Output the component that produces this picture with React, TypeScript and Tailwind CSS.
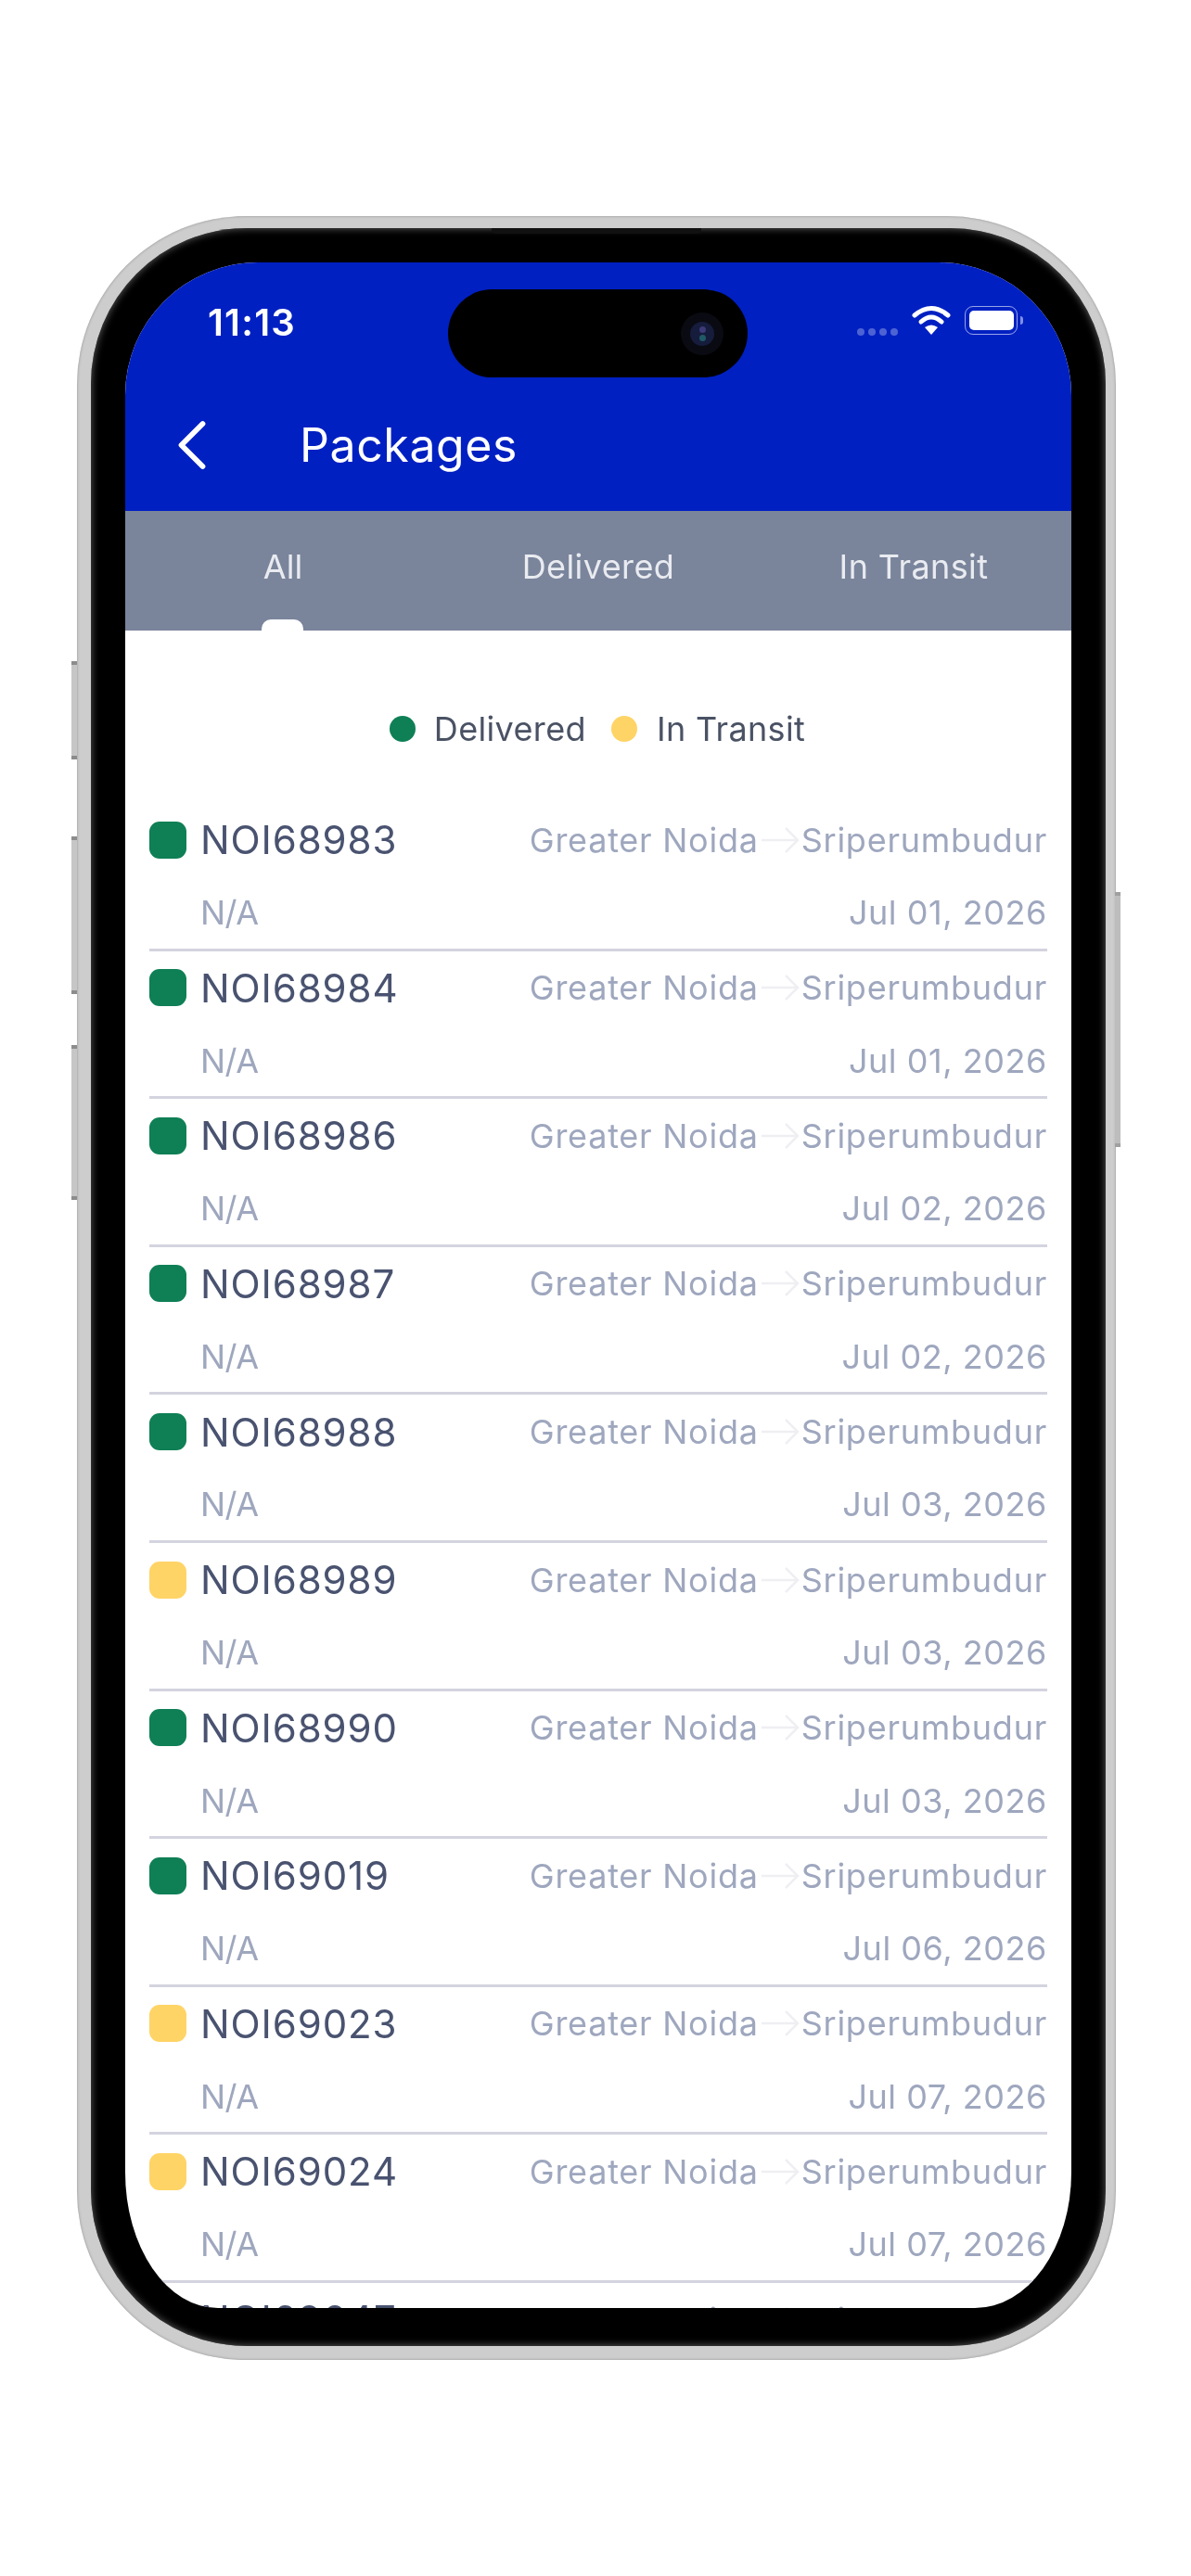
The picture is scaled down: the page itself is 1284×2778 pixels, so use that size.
import { ChevronLeft } from "lucide-react";

type Pkg = { id: string; date: string; status: "delivered" | "transit" };

const packages: Pkg[] = [
	{ id: "NOI68983", date: "Jul 01, 2026", status: "delivered" },
	{ id: "NOI68984", date: "Jul 01, 2026", status: "delivered" },
	{ id: "NOI68986", date: "Jul 02, 2026", status: "delivered" },
	{ id: "NOI68987", date: "Jul 02, 2026", status: "delivered" },
	{ id: "NOI68988", date: "Jul 03, 2026", status: "delivered" },
	{ id: "NOI68989", date: "Jul 03, 2026", status: "transit" },
	{ id: "NOI68990", date: "Jul 03, 2026", status: "delivered" },
	{ id: "NOI69019", date: "Jul 06, 2026", status: "delivered" },
	{ id: "NOI69023", date: "Jul 07, 2026", status: "transit" },
	{ id: "NOI69024", date: "Jul 07, 2026", status: "transit" },
	{ id: "NOI69047", date: "Jul 07, 2026", status: "delivered" },
];

const StatusIcons = () => (
	<div className="flex items-center">
		<div className="mt-[26px] flex gap-[4px] opacity-30">
			<span className="size-[8px] rounded-full bg-white" />
			<span className="size-[8px] rounded-full bg-white" />
			<span className="size-[8px] rounded-full bg-white" />
			<span className="size-[8px] rounded-full bg-white" />
		</div>
		<svg viewBox="0 0 42 34" className="ml-[15px] h-[34px] w-[42px]" fill="none" stroke="white" strokeWidth="5" strokeLinecap="round">
			<path d="M3 12 Q21 -3 39 12" />
			<path d="M10 19 Q21 9 32 19" />
			<path d="M21 33 L14 25 Q21 20 28 25 Z" fill="white" stroke="none" />
		</svg>
		<div className="ml-[15px] flex items-center">
			<div className="flex h-[31px] w-[57px] items-center justify-center rounded-[9px] border-[1.5px] border-white/60">
				<div className="h-[21px] w-[48px] rounded-[5px] bg-white" />
			</div>
			<div className="ml-[3px] h-[9px] w-[3px] rounded-r-full bg-white/50" />
		</div>
	</div>
);

const Row = ({ pkg }: { pkg: Pkg }) => (
	<div className="flex h-[159.6px] shrink-0 flex-col border-b-[3px] border-[#d4d4e0]">
		<div className="flex h-[80px] items-center">
			<span className={`size-[40px] rounded-[11px] ${pkg.status === "delivered" ? "bg-[#0f7f56]" : "bg-[#ffd466]"}`} />
			<span className="ml-[15px] text-[42px] tracking-[0.9px] text-[#495370]">{pkg.id}</span>
			<div className="ml-auto flex items-center text-[36px] tracking-[0.75px] text-[#9ea7be]">
				<span>Greater Noida</span>
				<svg viewBox="0 0 40 30" className="mx-[1px] h-[30px] w-[44px]" fill="none" stroke="#efeff3" strokeWidth="2.5">
					<path d="M0 15 H38 M26 2 L39 15 L26 28" />
				</svg>
				<span>Sriperumbudur</span>
			</div>
		</div>
		<div className="flex h-[78px] items-center justify-between text-[36px] tracking-[0.55px] text-[#9ea7be]">
			<span className="ml-[55px] tracking-[-0.5px]">N/A</span>
			<span>{pkg.date}</span>
		</div>
	</div>
);

export default function App() {
	return (
		<div className="h-[2778px] w-[1284px] overflow-hidden bg-white pl-[83px] pt-[233px] font-['Inter',sans-serif]">
			<div className="relative w-[1120px]">
				{/* side buttons */}
				<div className="absolute left-[-6px] top-[480px] h-[106px] w-[6px] border-y-[4px] border-[#8c8c8c] bg-[#c6c6c6]" />
				<div className="absolute left-[-6px] top-[669px] h-[170px] w-[6px] border-y-[4px] border-[#8c8c8c] bg-[#c6c6c6]" />
				<div className="absolute left-[-6px] top-[894px] h-[167px] w-[6px] border-y-[4px] border-[#8c8c8c] bg-[#c6c6c6]" />
				<div className="absolute right-[-5px] top-[729px] h-[275px] w-[6px] border-y-[4px] border-[#a0a0a0] bg-[#bdbdbd]" />

				<div className="rounded-[182px] bg-[#cdcdcd] pb-[15px] pl-[15px] pr-[11px] pt-[13px] shadow-[inset_0_0_3px_#8f8f8f]">
					<div className="relative rounded-[168px] bg-black p-[37px] pb-[41px] shadow-[inset_0_0_9px_#666]">
						<div className="absolute left-[432px] top-0 h-[6px] w-[226px] rounded-b-[4px] bg-[#111]" />
						<div className="relative h-[2206px] w-[1020px] overflow-hidden rounded-t-[143px] bg-white [border-bottom-left-radius:100px_146px] [border-bottom-right-radius:104px_146px]">
							{/* dynamic island */}
							<div className="absolute left-[348px] top-[29px] z-10 flex h-[95px] w-[323px] items-center justify-end rounded-full bg-black pr-[26px]">
								<div className="flex size-[46px] items-center justify-center rounded-full bg-[#0a0a12]">
									<div className="flex h-[26px] w-[26px] flex-col items-center justify-center gap-[2px] rounded-full bg-[#161c3c]">
										<span className="size-[7px] rounded-full bg-[#3c3a78]" />
										<span className="size-[7px] rounded-full bg-[#1f5a66]" />
									</div>
								</div>
							</div>

							<div className="h-[268px] bg-[#0020c2] text-white">
								<div className="flex h-[132px] items-start justify-between pl-[89px] pr-[52px] pt-[45px] blur-[0.4px]">
									<span className="text-[40px] font-semibold leading-[40px] tracking-[1.2px]">11:13</span>
									<StatusIcons />
								</div>
								<div className="flex h-[130px] items-center pl-[26px] blur-[0.4px]">
									<ChevronLeft className="size-[92px]" strokeWidth={1.5} />
									<span className="ml-[70px] text-[50px] tracking-[0.6px]">Packages</span>
								</div>
							</div>

							<div className="relative flex h-[129px] bg-[#7a859c] text-[#e9ebf0]">
								<div className="flex-1 pt-[36px] text-center text-[36px] leading-[48px] blur-[0.5px]">All</div>
								<div className="flex-1 pt-[36px] text-center text-[36px] leading-[48px] tracking-[0.4px] blur-[0.5px]">Delivered</div>
								<div className="flex-1 pt-[36px] text-center text-[36px] leading-[48px] tracking-[0.4px] blur-[0.5px]">In Transit</div>
								<div className="absolute bottom-0 left-[147px] h-[12px] w-[45px] rounded-t-[10px] bg-white" />
							</div>

							<div className="flex h-[186px] items-center justify-center pr-[2px] pt-[26px] text-[36px] tracking-[0.35px] text-[#4a5264] blur-[0.5px]">
								<span className="size-[28px] rounded-full bg-[#0f7f56]" />
								<span className="ml-[20px]">Delivered</span>
								<span className="ml-[27px] size-[28px] rounded-full bg-[#ffd466]" />
								<span className="ml-[21px]">In Transit</span>
							</div>

							<div className="flex flex-col px-[26px] blur-[0.5px]">
								{packages.map((pkg) => (
									<Row key={pkg.id} pkg={pkg} />
								))}
							</div>
						</div>
					</div>
				</div>
			</div>
		</div>
	);
}
